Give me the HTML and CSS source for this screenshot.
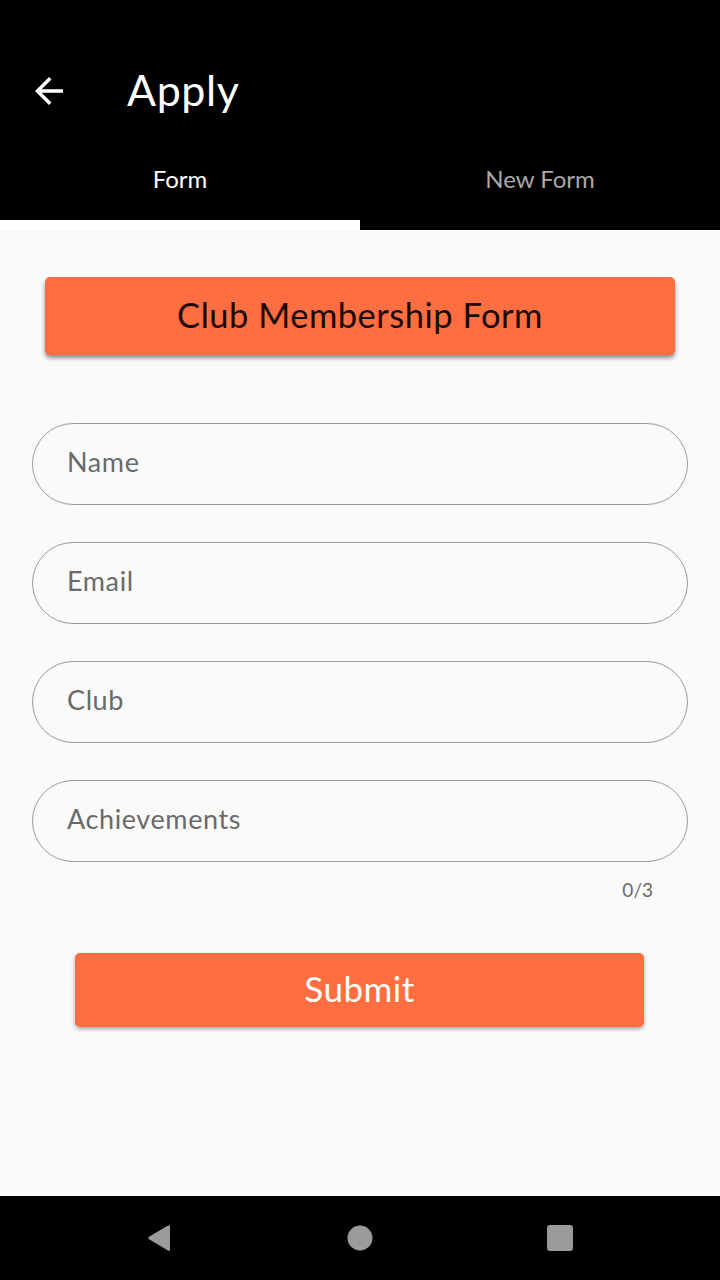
FILE: index.html
```html
<!DOCTYPE html>
<html>
<head>
<meta charset="utf-8">
<link rel="stylesheet" href="styles.css">
</head>
<body>
<div class="screen">
  <header class="appbar">
    <div class="toolbar">
      <svg class="back" width="42" height="42" viewBox="0 0 24 24"><path d="M20 11H7.83l5.59-5.59L12 4l-8 8 8 8 1.41-1.41L7.83 13H20v-2z" fill="#fff"/></svg>
      <h1 class="title">Apply</h1>
    </div>
    <nav class="tabs">
      <div class="tab active">Form</div>
      <div class="tab">New Form</div>
    </nav>
  </header>
  <main class="content">
    <div class="banner">Club Membership Form</div>
    <div class="fields">
      <div class="field">Name</div>
      <div class="field">Email</div>
      <div class="field">Club</div>
      <div class="field">Achievements</div>
    </div>
    <div class="counter">0/3</div>
    <button class="submit">Submit</button>
  </main>
  <footer class="navbar">
    <svg width="28" height="30" viewBox="0 0 28 30"><path d="M25 3.5 L25 26.5 Q25 28.5 23 27.5 L4 16.2 Q2.5 15 4 13.8 L23 2.5 Q25 1.5 25 3.5Z" fill="#9b9b9b"/></svg>
    <svg width="26" height="26" viewBox="0 0 26 26"><circle cx="13" cy="13" r="12.5" fill="#9b9b9b"/></svg>
    <svg width="26" height="26" viewBox="0 0 26 26"><rect x="0" y="0" width="26" height="26" rx="3" fill="#9b9b9b"/></svg>
  </footer>
</div>
</body>
</html>
```
FILE: styles.css
```css
* { box-sizing: border-box; }
html, body { margin: 0; padding: 0; }
body {
  width: 720px;
  height: 1280px;
  font-family: "Lato", "Noto Sans", sans-serif;
  background: #fafafa;
}
.screen {
  display: flex;
  flex-direction: column;
  height: 1280px;
}
.appbar {
  background: #000;
  padding-top: 48px;
}
.toolbar {
  display: flex;
  align-items: center;
  height: 86px;
}
.back {
  margin-left: 28px;
  margin-right: 57px;
  margin-bottom: 1px;
}
.title {
  margin: 0 0 4px;
  color: #fff;
  font-weight: 400;
  font-size: 43px;
  letter-spacing: 0.6px;
}
.tabs {
  display: flex;
  height: 96px;
}
.tab {
  flex: 1;
  display: flex;
  align-items: center;
  justify-content: center;
  color: #a9a9a9;
  font-size: 24px;
  padding-top: 3px;
  border-bottom: 10px solid transparent;
}
.tab.active {
  color: #fff;
  border-bottom-color: #fff;
}
.content {
  flex: 1;
  display: flex;
  flex-direction: column;
  padding: 47px 32px 0;
}
.banner {
  margin: 0 13px;
  height: 78px;
  background: #ff6e40;
  border-radius: 5px;
  box-shadow: 0 3px 4px rgba(0,0,0,0.45);
  display: flex;
  align-items: center;
  justify-content: center;
  padding-bottom: 3px;
  font-size: 34.5px;
  color: #1b0700;
  letter-spacing: 0.5px;
}
.fields {
  margin-top: 68px;
  display: flex;
  flex-direction: column;
  gap: 37px;
}
.field {
  height: 82px;
  border: 1.5px solid #9a9a9a;
  border-radius: 41px;
  display: flex;
  align-items: center;
  padding-left: 34px;
  padding-bottom: 5px;
  font-size: 27px;
  color: #6a6a6a;
  letter-spacing: 0.6px;
}
.counter {
  align-self: flex-end;
  margin-right: 35px;
  margin-top: 16px;
  font-size: 19px;
  color: #6a6a6a;
}
.submit {
  margin: 52px 44px 0 43px;
  height: 74px;
  border: none;
  background: #ff6e40;
  border-radius: 5px;
  box-shadow: 0 2px 4px rgba(0,0,0,0.35);
  color: #fff;
  padding: 0 0 4px;
  font-family: "Lato", "Noto Sans", sans-serif;
  font-size: 35px;
  letter-spacing: 0.5px;
}
.navbar {
  height: 84px;
  background: #000;
  display: flex;
  align-items: center;
  justify-content: space-between;
  padding: 0 147px 0 145px;
}
```
